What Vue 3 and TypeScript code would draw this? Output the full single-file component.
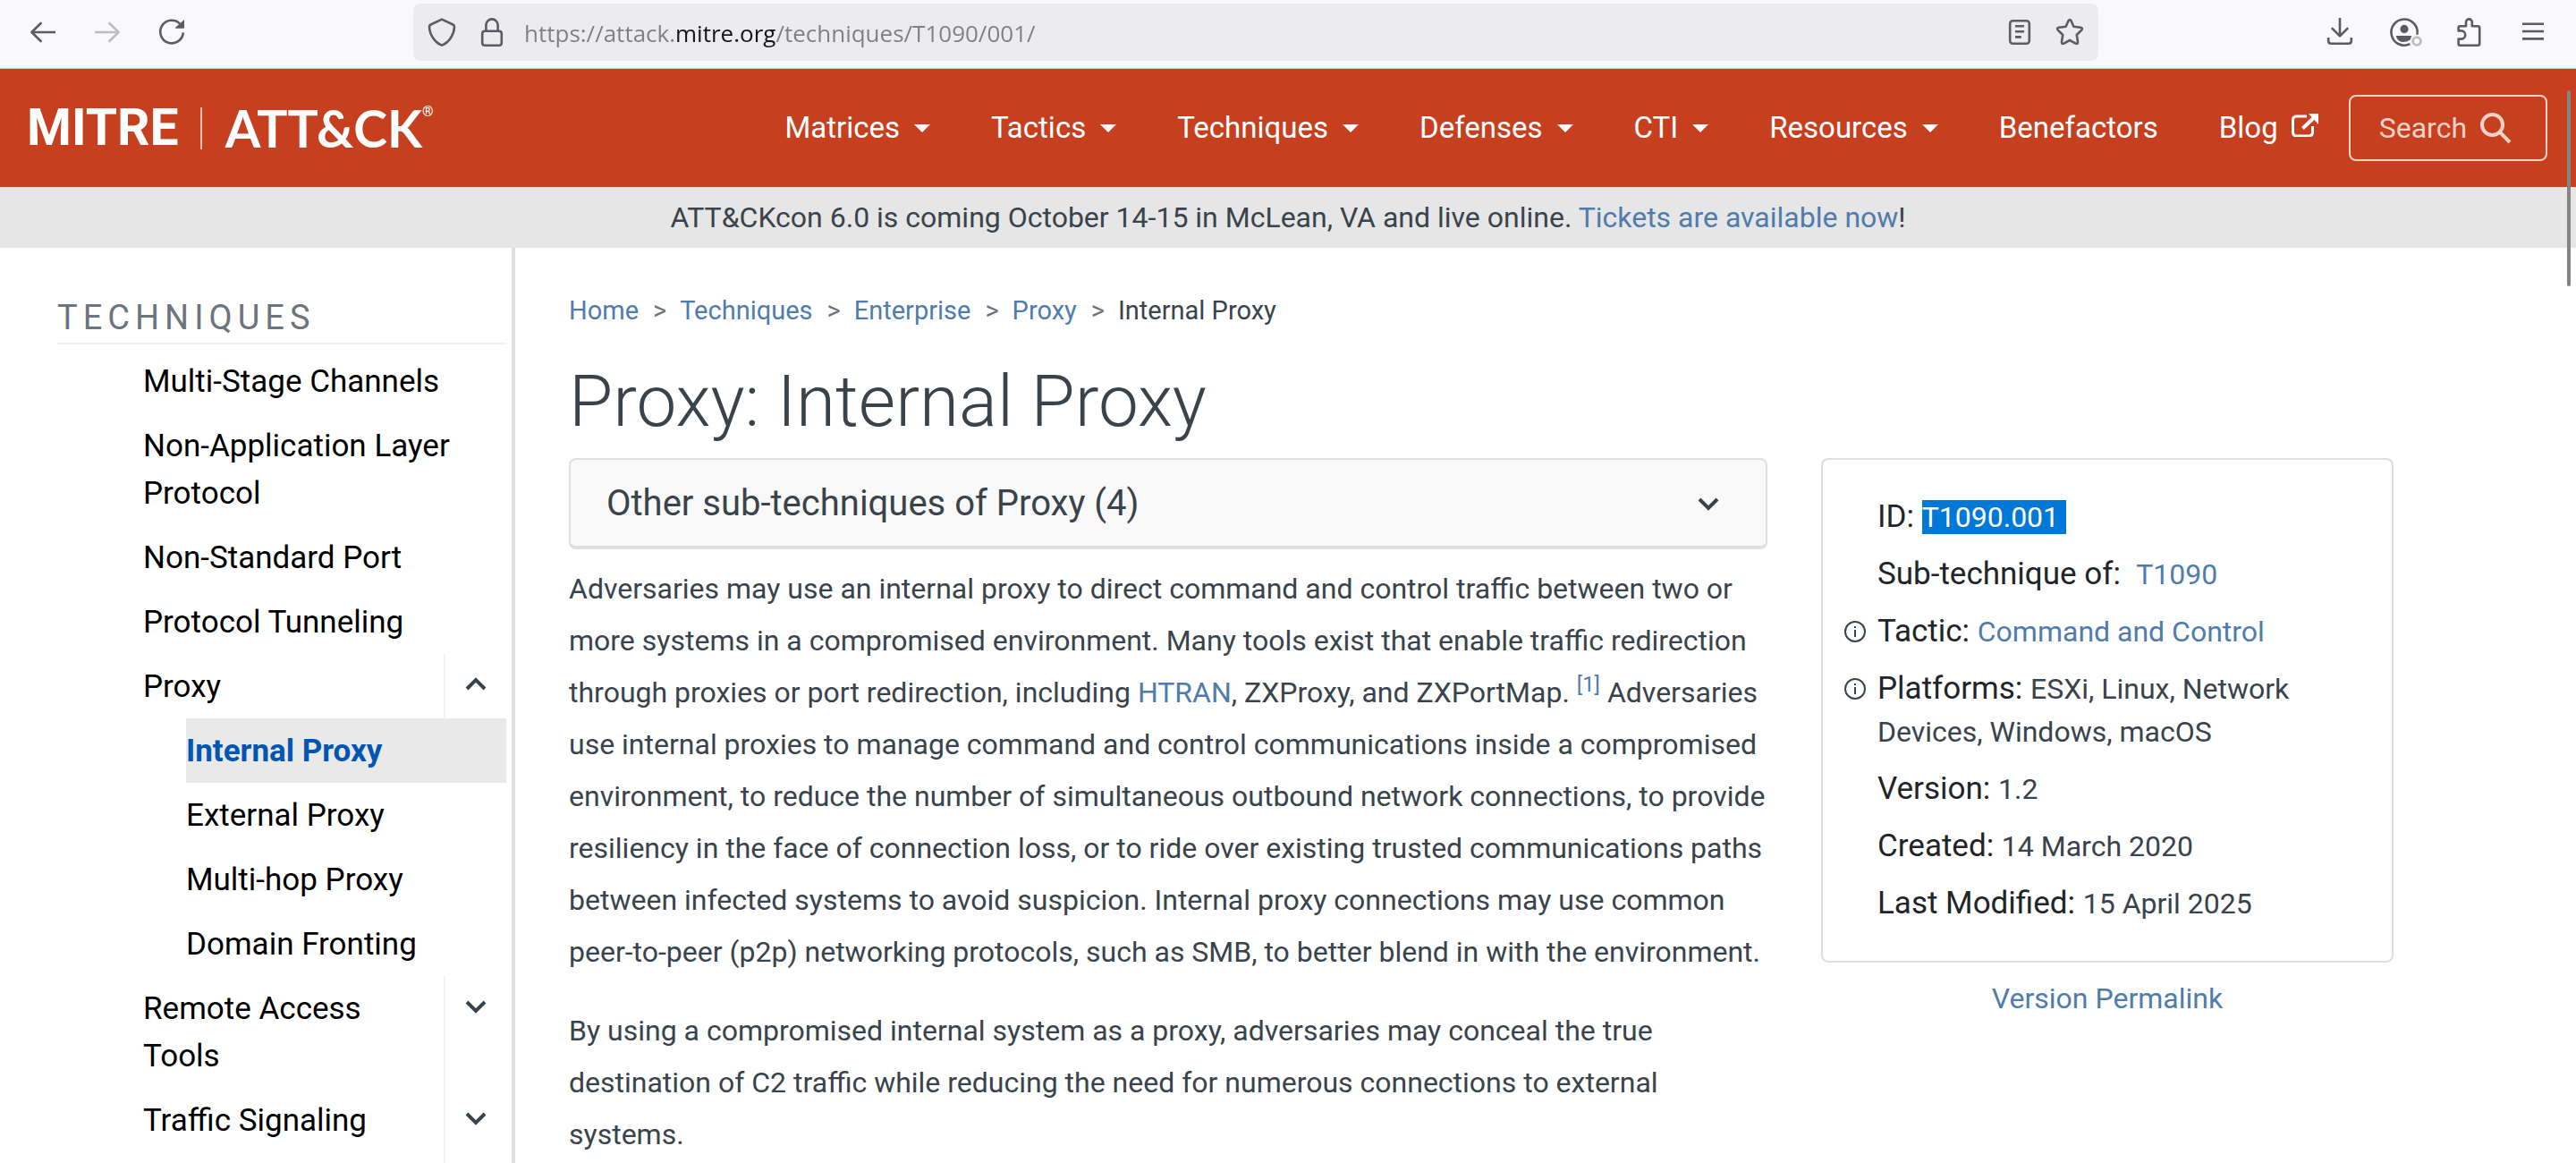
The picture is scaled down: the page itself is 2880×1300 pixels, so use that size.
<script setup lang="ts">
import { ref } from 'vue'

interface NavItem {
  label: string
  menu: boolean
}

interface SideItem {
  label: string
  expander?: 'up' | 'down'
  children?: { label: string; active?: boolean }[]
}

const url = ref('https://attack.mitre.org/techniques/T1090/001/')

const navItems: NavItem[] = [
  { label: 'Matrices', menu: true },
  { label: 'Tactics', menu: true },
  { label: 'Techniques', menu: true },
  { label: 'Defenses', menu: true },
  { label: 'CTI', menu: true },
  { label: 'Resources', menu: true },
  { label: 'Benefactors', menu: false },
]

const sideItems: SideItem[] = [
  { label: 'Multi-Stage Channels' },
  { label: 'Non-Application Layer Protocol' },
  { label: 'Non-Standard Port' },
  { label: 'Protocol Tunneling' },
  {
    label: 'Proxy',
    expander: 'up',
    children: [
      { label: 'Internal Proxy', active: true },
      { label: 'External Proxy' },
      { label: 'Multi-hop Proxy' },
      { label: 'Domain Fronting' },
    ],
  },
  { label: 'Remote Access Tools', expander: 'down' },
  { label: 'Traffic Signaling', expander: 'down' },
]

const crumbs: string[] = ['Home', 'Techniques', 'Enterprise', 'Proxy']
</script>

<template>
  <div class="window">
    <header class="toolbar">
      <div class="tool-group">
        <button class="tool" type="button" aria-label="Back">
          <svg viewBox="0 0 16 16"><path d="M15 8H1.8M7.2 2.6 1.7 8l5.5 5.4" /></svg>
        </button>
        <button class="tool faded" type="button" aria-label="Forward">
          <svg viewBox="0 0 16 16"><path d="M1 8h13.2M8.8 2.6 14.3 8l-5.5 5.4" /></svg>
        </button>
        <button class="tool" type="button" aria-label="Reload">
          <svg viewBox="0 0 16 16">
            <path d="M14.4 8.2A6.4 6.4 0 1 1 12.6 3.3" />
            <path class="solid" d="M15 1v4.4q0 .5-.5.5h-4.2q-.6 0-.2-.5z" />
          </svg>
        </button>
      </div>
      <div class="url-bar">
        <svg class="icon" viewBox="0 0 16 16">
          <path d="M8 .8 14 3.6q1 .4 1 1.5C14.8 9.4 12 13.8 8 15.3 4 13.8 1.2 9.4 1 5.1q0-1.1 1-1.5z" />
        </svg>
        <svg class="icon" viewBox="0 0 16 16">
          <rect x="2.6" y="7.4" width="10.8" height="8" rx="1.4" />
          <path d="M4.7 7.4V4a3.3 3.3 0 0 1 6.6 0v3.4" />
        </svg>
        <input v-model="url" class="url-input" type="text" aria-label="Address" spellcheck="false" />
        <button class="tool" type="button" aria-label="Reader view">
          <svg viewBox="0 0 16 16">
            <rect x="2.6" y="1.6" width="10.8" height="12.8" rx="1.6" />
            <path d="M5.5 4.6h5M5.5 7.6h5M5.5 10.7h3.4" />
          </svg>
        </button>
        <button class="tool" type="button" aria-label="Bookmark">
          <svg viewBox="0 0 16 16">
            <path d="M7.3 1.5q.7-1 1.4 0l1.5 3.4 3.9.5q1.4.3.5 1.4l-2.7 2.7.6 3.9q.1 1.4-1.2.9L8 12.5l-3.3 1.8q-1.3.5-1.2-.9l.6-3.9-2.7-2.7q-.9-1.1.5-1.4l3.9-.5z" />
          </svg>
        </button>
      </div>
      <div class="tool-group">
        <button class="tool" type="button" aria-label="Downloads">
          <svg viewBox="0 0 16 16"><path d="M8 0v10M3.4 5.6 8 10.2l4.6-4.6M1.6 11v1.9q0 1.5 1.5 1.5h9.8q1.5 0 1.5-1.5V11" /></svg>
        </button>
        <button class="tool" type="button" aria-label="Account">
          <svg viewBox="0 0 16 16">
            <path d="M15.2 9.4A7.3 7.3 0 1 0 11.2 14.6" />
            <circle class="solid" cx="8" cy="6.2" r="2.3" />
            <path class="solid" d="M3.4 10h8.8l-.9 2.3Q8 14.6 4.8 12.6 3.6 11.6 3.4 10z" />
            <circle class="badge" cx="15" cy="13" r="2.2" />
          </svg>
        </button>
        <button class="tool" type="button" aria-label="Extensions">
          <svg viewBox="0 0 16 16">
            <path d="M2.3 7.2V5.6q0-1 1-1h3.2V2.4a1.7 1.7 0 0 1 3.4 0v2.2h3.2q1 0 1 1v8.8q0 1-1 1H3.3q-1 0-1-1v-2.6h1.5a2.3 2.3 0 0 0 0-4.6z" />
          </svg>
        </button>
        <button class="tool" type="button" aria-label="Menu">
          <svg viewBox="0 0 16 16"><path d="M2 3.4h12M2 7.5h12M2 11.7h12" /></svg>
        </button>
      </div>
    </header>

    <nav class="site-nav" aria-label="Main">
      <a class="logo" href="#">
        <span class="logo-mitre">MITRE</span>
        <span class="logo-rule"></span>
        <span class="logo-attack">ATT&amp;CK</span>
        <span class="logo-reg">®</span>
      </a>
      <div class="nav-links">
        <a v-for="item in navItems" :key="item.label" class="nav-link" href="#">
          {{ item.label }}<span v-if="item.menu" class="caret"></span>
        </a>
        <a class="nav-link" href="#">
          Blog
          <svg class="external" viewBox="0 0 30 26">
            <path d="M17 3H6Q1.5 3 1.5 7v13.5Q1.5 25 6 25h13q4.5 0 4.5-4.5V14" />
            <path class="shaft" d="M12.5 16.5 25 4.5" />
            <path class="head" d="M19 0h11v12z" />
          </svg>
        </a>
        <button class="search" type="button">
          Search
          <svg viewBox="0 0 35 35">
            <circle cx="13.5" cy="13.5" r="11.5" />
            <path d="M22 22 33 33" />
          </svg>
        </button>
      </div>
    </nav>

    <div class="banner">
      <p>ATT&amp;CKcon 6.0 is coming October 14-15 in McLean, VA and live online. <a href="#">Tickets are available now</a>!</p>
    </div>

    <div class="page">
      <aside class="sidebar">
        <h2>TECHNIQUES</h2>
        <ul class="tree">
          <li v-for="item in sideItems" :key="item.label">
            <div class="tree-row">
              <a href="#">{{ item.label }}</a>
              <button v-if="item.expander" class="expander" type="button" :aria-label="'Toggle ' + item.label">
                <svg class="chevron" viewBox="0 0 24 16">
                  <path :d="item.expander === 'up' ? 'M2 13 12 3l10 10' : 'M2 3l10 10L22 3'" />
                </svg>
              </button>
            </div>
            <ul v-if="item.children" class="subtree">
              <li v-for="child in item.children" :key="child.label">
                <a href="#" :class="{ active: child.active }">{{ child.label }}</a>
              </li>
            </ul>
          </li>
        </ul>
      </aside>

      <main class="content">
        <ol class="breadcrumb">
          <li v-for="crumb in crumbs" :key="crumb"><a href="#">{{ crumb }}</a></li>
          <li>Internal Proxy</li>
        </ol>
        <h1>Proxy: Internal Proxy</h1>
        <div class="columns">
          <div class="description">
            <button class="accordion" type="button">
              Other sub-techniques of Proxy (4)
              <svg class="chevron" viewBox="0 0 24 16"><path d="M2 3l10 10L22 3" /></svg>
            </button>
            <p>
              Adversaries may use an internal proxy to direct command and control traffic between two or more systems in
              a compromised environment. Many tools exist that enable traffic redirection through proxies or port
              redirection, including <a href="#">HTRAN</a>, ZXProxy, and ZXPortMap. <sup><a href="#">[1]</a></sup>
              Adversaries use internal proxies to manage command and control communications inside a compromised
              environment, to reduce the number of simultaneous outbound network connections, to provide resiliency in
              the face of connection loss, or to ride over existing trusted communications paths between infected
              systems to avoid suspicion. Internal proxy connections may use common peer-to-peer (p2p) networking
              protocols, such as SMB, to better blend in with the environment.
            </p>
            <p>
              By using a compromised internal system as a proxy, adversaries may conceal the true destination of C2
              traffic while reducing the need for numerous connections to external systems.
            </p>
          </div>

          <div class="side-info">
            <div class="card">
              <div class="fact"><p><b>ID: </b><span class="selected">T1090.001 </span></p></div>
              <div class="fact"><p><b>Sub-technique of:&nbsp; </b><a href="#">T1090</a></p></div>
              <div class="fact">
                <svg class="info" viewBox="0 0 24 24">
                  <circle cx="12" cy="12" r="11" />
                  <path d="M12 10v8M12 6v2" />
                </svg>
                <p><b>Tactic: </b><a href="#">Command and Control</a></p>
              </div>
              <div class="fact">
                <svg class="info" viewBox="0 0 24 24">
                  <circle cx="12" cy="12" r="11" />
                  <path d="M12 10v8M12 6v2" />
                </svg>
                <p><b>Platforms: </b>ESXi, Linux, Network Devices, Windows, macOS</p>
              </div>
              <div class="fact"><p><b>Version: </b>1.2</p></div>
              <div class="fact"><p><b>Created: </b>14 March 2020</p></div>
              <div class="fact"><p><b>Last Modified: </b>15 April 2025</p></div>
            </div>
            <a class="permalink" href="#">Version Permalink</a>
          </div>
        </div>
      </main>
    </div>
    <div class="scroll-thumb"></div>
  </div>
</template>

<style>
body {
  margin: 0;
  background: #fff;
}
</style>

<style scoped>
.window {
  position: relative;
  display: flex;
  flex-direction: column;
  height: 100vh;
  overflow: hidden;
  font-family: Roboto, "Liberation Sans", sans-serif;
  font-size: 32px;
  line-height: 48px;
  color: #39434c;
}

.window * {
  box-sizing: border-box;
}

a {
  color: #4f7cac;
  text-decoration: none;
}

button {
  margin: 0;
  padding: 0;
  border: 0;
  background: none;
  font: inherit;
  color: inherit;
  cursor: pointer;
}

p,
h1,
h2,
ul,
ol {
  margin: 0;
  padding: 0;
  list-style: none;
}

svg {
  display: block;
  flex: none;
  fill: none;
  stroke: currentColor;
}

/* Browser toolbar */
.toolbar {
  display: flex;
  flex: none;
  align-items: center;
  height: 77px;
  padding: 0 32px 4px;
  border-bottom: 1px solid #cccccf;
  background: #f9f9fb;
  color: #5b5b66;
}

.tool-group {
  display: flex;
  gap: 40px;
}

.tool,
.icon,
.tool svg {
  width: 32px;
  height: 32px;
  flex: none;
  overflow: visible;
  stroke-width: 1.3;
  stroke-linejoin: round;
}

.tool .solid {
  fill: currentColor;
  stroke: none;
}

.tool .badge {
  stroke: #bdbdc4;
  stroke-width: 1.4;
}

.faded {
  color: #bdbdc4;
}

.url-bar {
  display: flex;
  flex: 1;
  align-items: center;
  gap: 24px;
  height: 64px;
  margin: 0 254px;
  padding: 0 16px;
  border-radius: 8px;
  background: #ececee;
}

/* The host name is set darker than the rest of the address */
.url-input {
  flex: 1;
  min-width: 0;
  height: 44px;
  margin-left: -4px;
  padding: 2px 0 0;
  border: 0;
  outline: 0;
  background: linear-gradient(to right, #7f7f82 168px, #15141a 168px, #15141a 281px, #7f7f82 281px);
  background-clip: text;
  font-family: "Open Sans", "Noto Sans", sans-serif;
  font-size: 26px;
  color: transparent;
}

/* Site navigation */
.site-nav {
  display: flex;
  flex: none;
  align-items: center;
  justify-content: space-between;
  height: 132px;
  padding: 0 32px 0 30px;
  background: #c63f1f;
  color: #fff;
}

.logo {
  display: flex;
  align-items: center;
  color: #fff;
}

.logo-mitre {
  font-size: 57px;
  font-weight: 700;
}

.logo-rule {
  width: 2px;
  height: 47px;
  margin: 0 26px 0 24px;
  background: #eec0b4;
}

.logo-attack {
  font-family: Lato, sans-serif;
  font-size: 57px;
  font-weight: 700;
}

.logo-reg {
  align-self: flex-start;
  font-size: 16px;
  line-height: 12px;
}

.nav-links {
  display: flex;
  align-items: center;
  gap: 68px;
}

.nav-link {
  display: flex;
  align-items: center;
  font-size: 33px;
  color: #fff;
}

.caret {
  margin-left: 16px;
  border: 9px solid transparent;
  border-top-color: #fff;
  border-bottom: 0;
}

.external {
  width: 30px;
  height: 26px;
  margin: 0 0 6px 15px;
  stroke-width: 3;
}

.external .shaft {
  stroke-width: 4;
}

.external .head {
  fill: currentColor;
  stroke: none;
}

.search {
  display: flex;
  align-items: center;
  gap: 15px;
  height: 74px;
  margin-left: -34px;
  padding: 0 38px 0 32px;
  border: 2px solid #f4d2c8;
  border-radius: 8px;
  color: #f4d2c8;
}

.search svg {
  width: 35px;
  height: 35px;
  stroke-width: 4;
}

.banner {
  display: flex;
  flex: none;
  align-items: center;
  justify-content: center;
  height: 68px;
  background: #e6e6e6;
}

/* Page body */
.page {
  display: flex;
  flex: 1;
  min-height: 0;
}

.sidebar {
  display: flex;
  flex: none;
  flex-direction: column;
  width: 576px;
  padding: 48px 6px 0 64px;
  border-right: 4px solid #dedede;
}

.sidebar h2 {
  height: 60px;
  margin-bottom: 5px;
  border-bottom: 2px solid #f2f2f2;
  font-size: 38px;
  font-weight: 400;
  line-height: 60px;
  letter-spacing: 6px;
  color: #6c757d;
}

.tree {
  display: flex;
  flex: 1;
  flex-direction: column;
  padding-left: 96px;
  font-size: 35px;
  line-height: 53px;
}

.tree > li:last-child {
  display: flex;
  flex: 1;
  flex-direction: column;
}

.tree-row {
  display: flex;
  flex: 1;
}

.tree a {
  display: block;
  flex: 1;
  padding: 10px 0 9px;
  color: #000;
}

.expander {
  display: flex;
  justify-content: center;
  width: 70px;
  margin-left: 16px;
  padding: 26px 0 0;
  border-left: 2px solid #f2f2f2;
}

.chevron {
  width: 24px;
  height: 16px;
  stroke-width: 4;
}

.subtree {
  padding-left: 48px;
}

.tree .active {
  background: #e9e9e9;
  font-weight: 700;
  color: #0156b3;
}

.content {
  flex: 1;
  min-width: 0;
  padding: 49px 204px 0 60px;
}

.breadcrumb {
  display: flex;
  margin-bottom: 32px;
  font-size: 29px;
  line-height: 43px;
}

.breadcrumb li + li::before {
  content: ">";
  padding: 0 15px 0 16px;
  color: #6c757d;
}

h1 {
  margin-bottom: 15px;
  font-size: 80px;
  font-weight: 300;
  line-height: 96px;
}

.columns {
  display: grid;
  grid-template-columns: 67fr 32fr;
  gap: 60px;
  align-items: start;
}

.accordion {
  display: flex;
  align-items: center;
  justify-content: space-between;
  width: 100%;
  height: 102px;
  margin-bottom: 15px;
  padding: 2px 52px 0 40px;
  border: 2px solid #dfdfdf;
  border-bottom-width: 4px;
  border-radius: 8px;
  background: #f9f9f9;
  font-size: 40px;
}

.description p {
  margin-bottom: 30px;
  line-height: 58px;
}

sup {
  font-size: 24px;
  line-height: 0;
  vertical-align: 12px;
}

.card {
  display: grid;
  gap: 16px;
  padding: 40px 24px;
  border: 2px solid #dfdfdf;
  border-radius: 8px;
}

.fact {
  display: grid;
  grid-template-columns: 24px 1fr;
  column-gap: 13px;
}

.fact p {
  grid-column: 2;
}

.fact b {
  font-size: 35px;
  font-weight: 400;
  line-height: 40px;
  color: #212529;
}

.selected {
  background: #0078d7;
  white-space: pre;
  color: #fff;
}

.info {
  width: 24px;
  height: 24px;
  margin-top: 12px;
  stroke-width: 2;
}

.permalink {
  display: block;
  margin-top: 16px;
  text-align: center;
}

.scroll-thumb {
  position: absolute;
  top: 101px;
  right: 6px;
  width: 4px;
  height: 219px;
  border-radius: 2px;
  background: #858585;
}
</style>
